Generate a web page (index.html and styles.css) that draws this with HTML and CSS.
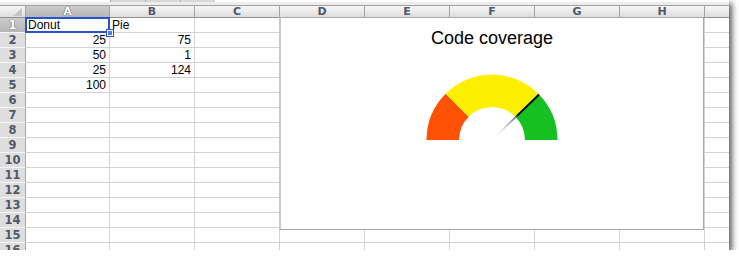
FILE: index.html
```html
<!DOCTYPE html>
<html lang="en">
<head>
    <meta charset="UTF-8">
    <title>Code coverage</title>
    <link rel="stylesheet" href="styles.css">
</head>
<body>
    <div class="window">
        <div class="toolbar">
            <span class="tab"></span><span class="tab"></span><span class="tab"></span>
        </div>
        <div class="sheet">
            <div class="row head">
                <div class="c corner"></div>
                <div class="c on">A</div><div class="c">B</div><div class="c">C</div><div class="c">D</div>
                <div class="c">E</div><div class="c">F</div><div class="c">G</div><div class="c">H</div><div class="c"></div>
            </div>
            <div class="row">
                <div class="c num on">1</div>
                <div class="c sel">Donut</div><div class="c">Pie</div><div class="c"></div><div class="c"></div>
                <div class="c"></div><div class="c"></div><div class="c"></div><div class="c"></div><div class="c"></div>
            </div>
            <div class="row">
                <div class="c num">2</div>
                <div class="c r">25</div><div class="c r">75</div><div class="c"></div><div class="c"></div>
                <div class="c"></div><div class="c"></div><div class="c"></div><div class="c"></div><div class="c"></div>
            </div>
            <div class="row">
                <div class="c num">3</div>
                <div class="c r">50</div><div class="c r">1</div><div class="c"></div><div class="c"></div>
                <div class="c"></div><div class="c"></div><div class="c"></div><div class="c"></div><div class="c"></div>
            </div>
            <div class="row">
                <div class="c num">4</div>
                <div class="c r">25</div><div class="c r">124</div><div class="c"></div><div class="c"></div>
                <div class="c"></div><div class="c"></div><div class="c"></div><div class="c"></div><div class="c"></div>
            </div>
            <div class="row">
                <div class="c num">5</div>
                <div class="c r">100</div><div class="c"></div><div class="c"></div><div class="c"></div>
                <div class="c"></div><div class="c"></div><div class="c"></div><div class="c"></div><div class="c"></div>
            </div>
            <div class="row">
                <div class="c num">6</div>
                <div class="c"></div><div class="c"></div><div class="c"></div><div class="c"></div>
                <div class="c"></div><div class="c"></div><div class="c"></div><div class="c"></div><div class="c"></div>
            </div>
            <div class="row">
                <div class="c num">7</div>
                <div class="c"></div><div class="c"></div><div class="c"></div><div class="c"></div>
                <div class="c"></div><div class="c"></div><div class="c"></div><div class="c"></div><div class="c"></div>
            </div>
            <div class="row">
                <div class="c num">8</div>
                <div class="c"></div><div class="c"></div><div class="c"></div><div class="c"></div>
                <div class="c"></div><div class="c"></div><div class="c"></div><div class="c"></div><div class="c"></div>
            </div>
            <div class="row">
                <div class="c num">9</div>
                <div class="c"></div><div class="c"></div><div class="c"></div><div class="c"></div>
                <div class="c"></div><div class="c"></div><div class="c"></div><div class="c"></div><div class="c"></div>
            </div>
            <div class="row">
                <div class="c num">10</div>
                <div class="c"></div><div class="c"></div><div class="c"></div><div class="c"></div>
                <div class="c"></div><div class="c"></div><div class="c"></div><div class="c"></div><div class="c"></div>
            </div>
            <div class="row">
                <div class="c num">11</div>
                <div class="c"></div><div class="c"></div><div class="c"></div><div class="c"></div>
                <div class="c"></div><div class="c"></div><div class="c"></div><div class="c"></div><div class="c"></div>
            </div>
            <div class="row">
                <div class="c num">12</div>
                <div class="c"></div><div class="c"></div><div class="c"></div><div class="c"></div>
                <div class="c"></div><div class="c"></div><div class="c"></div><div class="c"></div><div class="c"></div>
            </div>
            <div class="row">
                <div class="c num">13</div>
                <div class="c"></div><div class="c"></div><div class="c"></div><div class="c"></div>
                <div class="c"></div><div class="c"></div><div class="c"></div><div class="c"></div><div class="c"></div>
            </div>
            <div class="row">
                <div class="c num">14</div>
                <div class="c"></div><div class="c"></div><div class="c"></div><div class="c"></div>
                <div class="c"></div><div class="c"></div><div class="c"></div><div class="c"></div><div class="c"></div>
            </div>
            <div class="row">
                <div class="c num">15</div>
                <div class="c"></div><div class="c"></div><div class="c"></div><div class="c"></div>
                <div class="c"></div><div class="c"></div><div class="c"></div><div class="c"></div><div class="c"></div>
            </div>
            <div class="row">
                <div class="c num">16</div>
                <div class="c"></div><div class="c"></div><div class="c"></div><div class="c"></div>
                <div class="c"></div><div class="c"></div><div class="c"></div><div class="c"></div><div class="c"></div>
            </div>
        </div>

        <!-- floating chart over D1:H14 -->
        <div class="chart">
            <div class="chart-title">Code coverage</div>
            <svg class="gauge" width="140" height="72" viewBox="-70 -70 140 72">
                <defs>
                    <linearGradient id="needle" gradientUnits="userSpaceOnUse" x1="0" y1="0" x2="47" y2="-45.5">
                        <stop offset="0" stop-color="#fff" stop-opacity="0"/>
                        <stop offset="0.5" stop-color="#777"/>
                        <stop offset="0.55" stop-color="#000"/>
                        <stop offset="1" stop-color="#000"/>
                    </linearGradient>
                </defs>
                <path fill="#ff5103" d="M -65.5 0 A 65.5 65.5 0 0 1 -46.32 -46.32 L -23.33 -23.33 A 33 33 0 0 0 -33 0 Z"/>
                <path fill="#fcf000" d="M -46.32 -46.32 A 65.5 65.5 0 0 1 46.32 -46.32 L 23.33 -23.33 A 33 33 0 0 0 -23.33 -23.33 Z"/>
                <path fill="#16c021" d="M 46.32 -46.32 A 65.5 65.5 0 0 1 65.5 0 L 33 0 A 33 33 0 0 0 23.33 -23.33 Z"/>
                <line x1="0" y1="0" x2="47.1" y2="-45.5" stroke="url(#needle)" stroke-width="1.8"/>
            </svg>
        </div>
    </div>
</body>
</html>
```

FILE: styles.css
```css
body {
    margin: 0;
    padding: 0;
    background: #fff;
    font-family: "Liberation Sans", Arial, sans-serif;
}
.window {
    position: relative;
    width: 729px;
    height: 250px;
    overflow: hidden;
    background: #fff;
    box-shadow: 3px 3px 6px rgba(0, 0, 0, 0.65);
}
.toolbar {
    height: 5px;
    box-sizing: border-box;
    background: #ededed;
    border-top: 2px solid #fff;
    display: flex;
    padding-left: 110px;
}
.tab {
    width: 34px;
    height: 2px;
    margin-top: -2px;
    border-left: 1px solid #b0b0b0;
    background: #d8d8d8;
}
.row {
    display: flex;
    height: 15px;
}
.c {
    flex: none;
    width: 85px;
    height: 15px;
    box-sizing: border-box;
    border-right: 1px solid #d2d2d2;
    border-bottom: 1px solid #d2d2d2;
    font-size: 12px;
    line-height: 14px;
    padding: 0 2px;
    color: #000;
    white-space: nowrap;
    position: relative;
}
.c:nth-child(2) {
    width: 84px;
}
.c.r {
    text-align: right;
    padding-right: 3px;
}
.row.head {
    height: 13px;
}
.row.head .c {
    height: 13px;
    background: linear-gradient(#f6f6f6, #dedede);
    border-right: 1px solid #a4a4a4;
    border-bottom: 1px solid #8e8e8e;
    border-top: 1px solid #a0a0a0;
    font-family: "DejaVu Sans", sans-serif;
    font-weight: bold;
    font-size: 11px;
    line-height: 11px;
    text-align: center;
    color: #525866;
}
.row .c:first-child {
    width: 26px;
}
.c.num {
    background: #dedede;
    border-right: 1px solid #a4a4a4;
    border-bottom: 1px solid #f4f4f4;
    font-family: "DejaVu Sans", sans-serif;
    font-weight: bold;
    font-size: 11.5px;
    line-height: 15px;
    text-align: center;
    padding: 0;
    color: #525866;
}
.row.head .c.on,
.c.num.on {
    background: linear-gradient(#cccccc, #b6b6b6);
    color: #fff;
    text-shadow: 0 0 1px #555, 0 0 1px #555;
}
.corner::after {
    content: "";
    position: absolute;
    right: 3px;
    bottom: 1px;
    width: 0;
    height: 0;
    border-left: 9px solid transparent;
    border-bottom: 8px solid #c4c4c4;
}
.sel::before {
    content: "";
    position: absolute;
    left: -1px;
    top: -1px;
    right: -1px;
    bottom: -1px;
    border: 2px solid #2454d0;
}
.sel::after {
    content: "";
    position: absolute;
    right: -4px;
    bottom: -4px;
    width: 4px;
    height: 4px;
    background: #4a7ee8;
    border: 1px solid #fff;
    outline: 1px solid #2454d0;
    z-index: 2;
}
.chart {
    position: absolute;
    left: 279px;
    top: 17px;
    width: 425px;
    height: 213px;
    box-sizing: border-box;
    background: #fff;
    border: 1px solid #a8a8a8;
    border-left: 2px solid #c8c8c8;
    padding-top: 10px;
    text-align: center;
    z-index: 3;
}
.chart-title {
    font-size: 18px;
    line-height: 21px;
    color: #000;
}
.gauge {
    display: block;
    margin: 21px auto 0;
}
```
